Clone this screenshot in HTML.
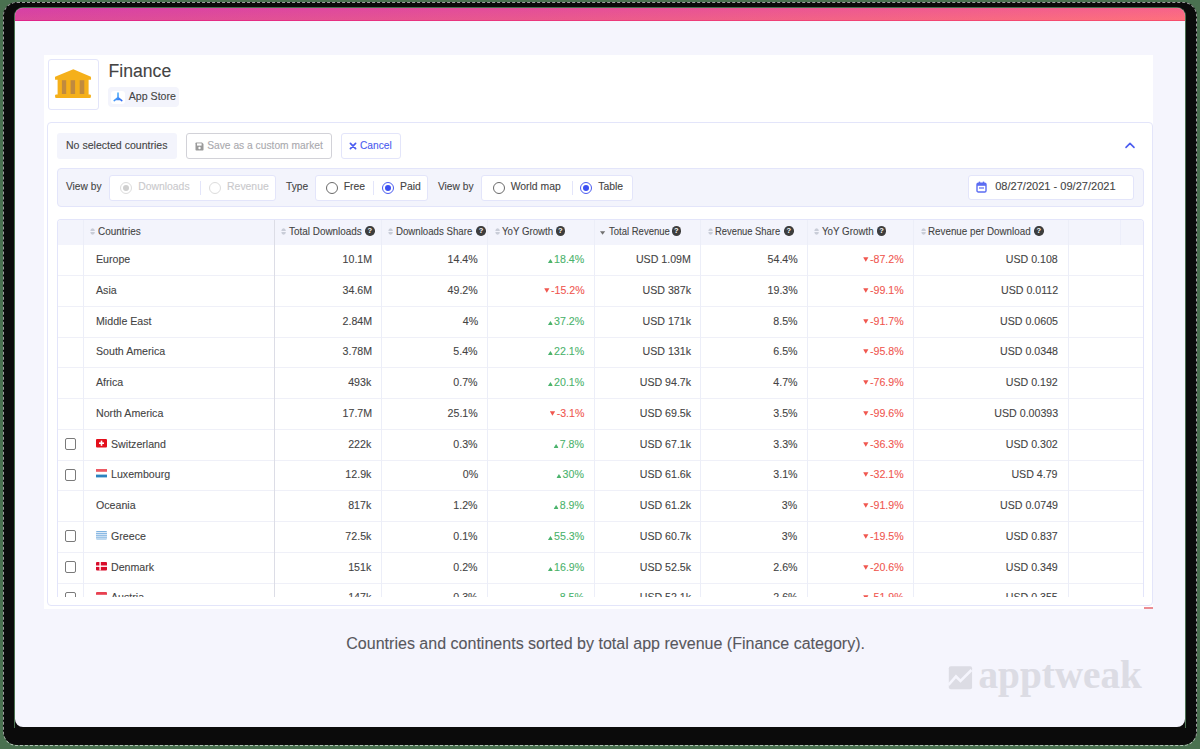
<!DOCTYPE html>
<html><head><meta charset="utf-8">
<style>
*{box-sizing:border-box;margin:0;padding:0}
html,body{width:1200px;height:749px;overflow:hidden;background:#4a7150;font-family:"Liberation Sans",sans-serif;position:relative}
.a{position:absolute}
.t{position:absolute;white-space:nowrap;line-height:1;font-family:"Liberation Sans",sans-serif;-webkit-text-stroke:0.1px currentColor}
#shadow{position:absolute;left:3px;top:2px;width:1194px;height:743px;background:#0b0b0b;border-radius:14px}
#card{position:absolute;left:15px;top:8px;width:1170px;height:719px;background:#f5f5fd;border-radius:8px;overflow:hidden}
#bar{position:absolute;left:0;top:0;width:1170px;height:13px;background:linear-gradient(180deg,rgba(215,50,190,.22),rgba(255,120,110,.12)),linear-gradient(90deg,#d644a0,#e9588e 50%,#ff717c)}
#sp{position:absolute;left:3px;top:2px;width:1194px;height:744px;border:1.5px dashed rgba(255,255,255,.6);border-radius:14px}
#gl{position:absolute;left:14px;top:7px;width:1172px;height:721px;border:1px solid #4a7150;border-bottom:none;border-radius:9px 9px 0 0}
#barline{position:absolute;left:0;top:12px;width:1170px;height:1.3px;background:linear-gradient(90deg,#e0238a,#f74e6c)}
</style></head><body>
<div id="shadow"></div>
<div id="sp"></div>
<div id="gl"></div>
<div id="card"><div id="bar"></div><div id="barline"></div></div>
<div class="a" style="left:44.00px;top:55.00px;width:1109.00px;height:554.00px;background:#fff"></div>
<div class="a" style="left:47.50px;top:58.50px;width:51.50px;height:51.50px;border:1px solid #e3e5fa;border-radius:3px;background:#fff"></div>
<svg class="a" style="left:50px;top:64px" width="46" height="38" viewBox="0 0 46 38">
<path d="M23.3 5.3 L40.9 12.8 Q41.2 15.7 40.9 15.7 L5.1 15.7 Q4.8 13 5.1 12.8 Z" fill="#f5b01a"/>
<rect x="7.6" y="15" width="31" height="16" fill="#f5b01a"/>
<rect x="5.1" y="30.5" width="35.8" height="3.6" rx="1" fill="#f5b01a"/>
<rect x="11.9" y="16.2" width="4.3" height="13.8" fill="#c08a3e"/>
<rect x="20.6" y="16.2" width="4.5" height="13.8" fill="#c08a3e"/>
<rect x="29.7" y="16.2" width="4.6" height="13.8" fill="#c08a3e"/>
</svg>
<div class="t" style="left:108.60px;top:63.00px;font-size:17.6px;color:#444;font-weight:normal;">Finance</div>
<div class="a" style="left:108.00px;top:87.30px;width:71.00px;height:19.70px;background:#f3f4fc;border-radius:4px"></div>
<div class="a" style="left:111.30px;top:90.70px;width:13.70px;height:13.30px;background:#fff;border-radius:3px"></div>
<svg class="a" style="left:111px;top:90px" width="14" height="14" viewBox="0 0 14 14">
<defs><linearGradient id="ag" x1="0" y1="0" x2="1" y2="1"><stop offset="0" stop-color="#5bc6fb"/><stop offset="1" stop-color="#2f6af3"/></linearGradient></defs>
<path d="M7 3 L7 7.6 M7 7.6 L3.2 10.6 M7 7.6 L10.8 10.6 M4.6 9.5 L9.4 9.5" stroke="url(#ag)" stroke-width="1.6" stroke-linecap="round" fill="none"/>
</svg>
<div class="t" style="left:128.80px;top:91.00px;font-size:10.6px;color:#444;font-weight:normal;">App Store</div>
<div class="a" style="left:47.00px;top:122.00px;width:1106.00px;height:484.00px;border:1px solid #e3e5fa;border-radius:4px;background:#fff"></div>
<div class="a" style="left:56.70px;top:132.50px;width:120.60px;height:26.50px;background:#f3f4fc;border-radius:3px"></div>
<div class="t" style="left:66.00px;top:140.00px;font-size:10.55px;color:#444;font-weight:normal;">No selected countries</div>
<div class="a" style="left:186.30px;top:132.80px;width:145.40px;height:25.90px;border:1px solid #d2d2d8;border-radius:3px;background:#fff"></div>
<svg class="a" style="left:195px;top:141.5px" width="9" height="9" viewBox="0 0 9 9">
<path d="M0.5 1.2 Q0.5 0.5 1.2 0.5 L7 0.5 L8.5 2 L8.5 7.8 Q8.5 8.5 7.8 8.5 L1.2 8.5 Q0.5 8.5 0.5 7.8 Z" fill="#9a9a9a"/>
<rect x="2" y="1.4" width="4.6" height="2.2" fill="#fff"/>
<circle cx="4.5" cy="6" r="1.2" fill="#fff"/>
</svg>
<div class="t" style="left:207.20px;top:141.00px;font-size:10.25px;color:#a9a9ae;font-weight:normal;">Save as a custom market</div>
<div class="a" style="left:340.50px;top:132.80px;width:60.20px;height:25.90px;border:1px solid #e3e5fa;border-radius:3px;background:#fff"></div>
<svg class="a" style="left:349px;top:141.5px" width="8" height="8" viewBox="0 0 8 8">
<path d="M1.4 1.4 L6.6 6.6 M6.6 1.4 L1.4 6.6" stroke="#4b5cf0" stroke-width="1.7" stroke-linecap="round"/>
</svg>
<div class="t" style="left:360.00px;top:141.00px;font-size:10.2px;color:#4b5cf0;font-weight:normal;">Cancel</div>
<svg class="a" style="left:1124px;top:141px" width="12" height="8" viewBox="0 0 12 8">
<path d="M2 6.4 L6 2.4 L10 6.4" stroke="#4b5cf0" stroke-width="1.6" fill="none" stroke-linecap="round" stroke-linejoin="round"/>
</svg>
<div class="a" style="left:56.70px;top:168.00px;width:1087.60px;height:38.70px;background:#f3f4fc;border:1px solid #e3e5fa;border-radius:4px"></div>
<div class="t" style="left:66.00px;top:182.00px;font-size:10.2px;color:#444;font-weight:normal;">View by</div>
<div class="a" style="left:109.00px;top:174.50px;width:167.20px;height:26.20px;background:#fff;border:1px solid #e3e5fa;border-radius:3px"></div>
<div class="a" style="left:120.20px;top:181.70px;width:12px;height:12px;border:1px solid #dcdcdc;border-radius:50%;background:#fff"></div>
<div class="a" style="left:123.20px;top:184.70px;width:6px;height:6px;border-radius:50%;background:#cfcfcf"></div>
<div class="t" style="left:138.20px;top:182.00px;font-size:10.4px;color:#c9c9cc;font-weight:normal;">Downloads</div>
<div class="a" style="left:200.20px;top:180.50px;width:1.00px;height:14.00px;background:#e3e5fa"></div>
<div class="a" style="left:208.90px;top:181.70px;width:12px;height:12px;border:1px solid #dcdcdc;border-radius:50%;background:#fff"></div>
<div class="t" style="left:227.10px;top:182.00px;font-size:10.4px;color:#c9c9cc;font-weight:normal;">Revenue</div>
<div class="t" style="left:286.00px;top:182.00px;font-size:10.2px;color:#444;font-weight:normal;">Type</div>
<div class="a" style="left:314.80px;top:174.50px;width:113.30px;height:26.20px;background:#fff;border:1px solid #e3e5fa;border-radius:3px"></div>
<div class="a" style="left:325.70px;top:181.70px;width:12px;height:12px;border:1px solid #6a6a6a;border-radius:50%;background:#fff"></div>
<div class="t" style="left:343.70px;top:182.00px;font-size:10.4px;color:#444;font-weight:normal;">Free</div>
<div class="a" style="left:373.20px;top:180.50px;width:1.00px;height:14.00px;background:#e3e5fa"></div>
<div class="a" style="left:381.80px;top:181.70px;width:12px;height:12px;border:1px solid #4b5cf0;border-radius:50%;background:#fff"></div>
<div class="a" style="left:384.80px;top:184.70px;width:6px;height:6px;border-radius:50%;background:#3b4ff2"></div>
<div class="t" style="left:400.00px;top:182.00px;font-size:10.4px;color:#444;font-weight:normal;">Paid</div>
<div class="t" style="left:438.00px;top:182.00px;font-size:10.2px;color:#444;font-weight:normal;">View by</div>
<div class="a" style="left:481.00px;top:174.50px;width:151.70px;height:26.20px;background:#fff;border:1px solid #e3e5fa;border-radius:3px"></div>
<div class="a" style="left:493.30px;top:181.70px;width:12px;height:12px;border:1px solid #6a6a6a;border-radius:50%;background:#fff"></div>
<div class="t" style="left:510.70px;top:182.00px;font-size:10.4px;color:#444;font-weight:normal;">World map</div>
<div class="a" style="left:571.80px;top:180.50px;width:1.00px;height:14.00px;background:#e3e5fa"></div>
<div class="a" style="left:580.00px;top:181.70px;width:12px;height:12px;border:1px solid #4b5cf0;border-radius:50%;background:#fff"></div>
<div class="a" style="left:583.00px;top:184.70px;width:6px;height:6px;border-radius:50%;background:#3b4ff2"></div>
<div class="t" style="left:598.30px;top:182.00px;font-size:10.4px;color:#444;font-weight:normal;">Table</div>
<div class="a" style="left:967.80px;top:175.30px;width:166.40px;height:24.90px;background:#fff;border:1px solid #e3e5fa;border-radius:3px"></div>
<svg class="a" style="left:976px;top:180.5px" width="11" height="12" viewBox="0 0 11 12">
<rect x="1" y="2.2" width="9" height="8.8" rx="1.3" fill="none" stroke="#5b6cf2" stroke-width="1.4"/>
<rect x="1" y="2.2" width="9" height="2.6" fill="#5b6cf2"/>
<rect x="2.8" y="0.6" width="1.4" height="2.4" fill="#5b6cf2"/>
<rect x="6.8" y="0.6" width="1.4" height="2.4" fill="#5b6cf2"/>
<rect x="3" y="6.4" width="5" height="1.2" fill="#5b6cf2"/>
</svg>
<div class="t" style="left:995.20px;top:181.00px;font-size:11.05px;color:#444;font-weight:normal;">08/27/2021 - 09/27/2021</div>
<div class="a" style="left:57.3px;top:219.3px;width:1086.90px;height:377.50px;overflow:hidden;border:1px solid #e3e5fa;border-bottom:none;border-radius:4px 4px 0 0;background:#fff">
</div>
<div class="a" style="left:58.30px;top:220.30px;width:1084.90px;height:24.55px;background:#f3f4fc;border-radius:3px 3px 0 0"></div>
<div class="a" style="left:58.30px;top:275.11px;width:1084.90px;height:1.00px;background:#eff0f8"></div>
<div class="a" style="left:58.30px;top:305.87px;width:1084.90px;height:1.00px;background:#eff0f8"></div>
<div class="a" style="left:58.30px;top:336.63px;width:1084.90px;height:1.00px;background:#eff0f8"></div>
<div class="a" style="left:58.30px;top:367.39px;width:1084.90px;height:1.00px;background:#eff0f8"></div>
<div class="a" style="left:58.30px;top:398.15px;width:1084.90px;height:1.00px;background:#eff0f8"></div>
<div class="a" style="left:58.30px;top:428.91px;width:1084.90px;height:1.00px;background:#eff0f8"></div>
<div class="a" style="left:58.30px;top:459.67px;width:1084.90px;height:1.00px;background:#eff0f8"></div>
<div class="a" style="left:58.30px;top:490.43px;width:1084.90px;height:1.00px;background:#eff0f8"></div>
<div class="a" style="left:58.30px;top:521.19px;width:1084.90px;height:1.00px;background:#eff0f8"></div>
<div class="a" style="left:58.30px;top:551.95px;width:1084.90px;height:1.00px;background:#eff0f8"></div>
<div class="a" style="left:58.30px;top:582.71px;width:1084.90px;height:1.00px;background:#eff0f8"></div>
<div class="a" style="left:82.90px;top:220.30px;width:1.00px;height:376.50px;background:#eceef8"></div>
<div class="a" style="left:274.00px;top:220.30px;width:1.00px;height:376.50px;background:#dcdde6"></div>
<div class="a" style="left:380.50px;top:220.30px;width:1.00px;height:376.50px;background:#eceef8"></div>
<div class="a" style="left:487.00px;top:220.30px;width:1.00px;height:376.50px;background:#eceef8"></div>
<div class="a" style="left:593.50px;top:220.30px;width:1.00px;height:376.50px;background:#eceef8"></div>
<div class="a" style="left:699.80px;top:220.30px;width:1.00px;height:376.50px;background:#eceef8"></div>
<div class="a" style="left:806.50px;top:220.30px;width:1.00px;height:376.50px;background:#eceef8"></div>
<div class="a" style="left:913.00px;top:220.30px;width:1.00px;height:376.50px;background:#eceef8"></div>
<div class="a" style="left:1067.50px;top:220.30px;width:1.00px;height:376.50px;background:#eceef8"></div>
<div class="a" style="left:1119.90px;top:220.30px;width:1.00px;height:24.55px;background:#eceefa"></div>
<svg class="a" style="left:90.00px;top:227.6px" width="6" height="7" viewBox="0 0 6 7"><path d="M0.3 3 Q0.6 0.4 2.6 0.2 Q4.6 0.4 4.9 3 Z M0.3 3.9 L4.9 3.9 Q4.6 6.6 2.6 6.8 Q0.6 6.6 0.3 3.9 Z" fill="#c9cdd8"/></svg>
<div class="t" style="left:98.00px;top:226.00px;font-size:11.2px;color:#444;font-weight:normal;transform:scaleX(0.8908);transform-origin:0 0;">Countries</div>
<svg class="a" style="left:280.50px;top:227.6px" width="6" height="7" viewBox="0 0 6 7"><path d="M0.3 3 Q0.6 0.4 2.6 0.2 Q4.6 0.4 4.9 3 Z M0.3 3.9 L4.9 3.9 Q4.6 6.6 2.6 6.8 Q0.6 6.6 0.3 3.9 Z" fill="#c9cdd8"/></svg>
<div class="t" style="left:289.20px;top:226.00px;font-size:11.2px;color:#444;font-weight:normal;transform:scaleX(0.8871);transform-origin:0 0;">Total Downloads</div>
<div class="a" style="left:365.00px;top:226px;width:9.5px;height:9.5px;border-radius:50%;background:#3d3d3d;color:#fff;font-size:7.5px;line-height:9.5px;text-align:center;font-weight:bold;font-family:"Liberation Sans",sans-serif">?</div>
<svg class="a" style="left:388.20px;top:227.6px" width="6" height="7" viewBox="0 0 6 7"><path d="M0.3 3 Q0.6 0.4 2.6 0.2 Q4.6 0.4 4.9 3 Z M0.3 3.9 L4.9 3.9 Q4.6 6.6 2.6 6.8 Q0.6 6.6 0.3 3.9 Z" fill="#c9cdd8"/></svg>
<div class="t" style="left:395.70px;top:226.00px;font-size:11.2px;color:#444;font-weight:normal;transform:scaleX(0.8642);transform-origin:0 0;">Downloads Share</div>
<div class="a" style="left:476.40px;top:226px;width:9.5px;height:9.5px;border-radius:50%;background:#3d3d3d;color:#fff;font-size:7.5px;line-height:9.5px;text-align:center;font-weight:bold;font-family:"Liberation Sans",sans-serif">?</div>
<svg class="a" style="left:494.60px;top:227.6px" width="6" height="7" viewBox="0 0 6 7"><path d="M0.3 3 Q0.6 0.4 2.6 0.2 Q4.6 0.4 4.9 3 Z M0.3 3.9 L4.9 3.9 Q4.6 6.6 2.6 6.8 Q0.6 6.6 0.3 3.9 Z" fill="#c9cdd8"/></svg>
<div class="t" style="left:502.00px;top:226.00px;font-size:11.2px;color:#444;font-weight:normal;transform:scaleX(0.8639);transform-origin:0 0;">YoY Growth</div>
<div class="a" style="left:555.50px;top:226px;width:9.5px;height:9.5px;border-radius:50%;background:#3d3d3d;color:#fff;font-size:7.5px;line-height:9.5px;text-align:center;font-weight:bold;font-family:"Liberation Sans",sans-serif">?</div>
<svg class="a" style="left:600.30px;top:230.5px" width="6" height="4" viewBox="0 0 6 4"><path d="M0 0.2 L5.2 0.2 L2.6 3.8 Z" fill="#707070"/></svg>
<div class="t" style="left:608.50px;top:226.00px;font-size:11.2px;color:#444;font-weight:normal;transform:scaleX(0.8505);transform-origin:0 0;">Total Revenue</div>
<div class="a" style="left:671.50px;top:226px;width:9.5px;height:9.5px;border-radius:50%;background:#3d3d3d;color:#fff;font-size:7.5px;line-height:9.5px;text-align:center;font-weight:bold;font-family:"Liberation Sans",sans-serif">?</div>
<svg class="a" style="left:707.60px;top:227.6px" width="6" height="7" viewBox="0 0 6 7"><path d="M0.3 3 Q0.6 0.4 2.6 0.2 Q4.6 0.4 4.9 3 Z M0.3 3.9 L4.9 3.9 Q4.6 6.6 2.6 6.8 Q0.6 6.6 0.3 3.9 Z" fill="#c9cdd8"/></svg>
<div class="t" style="left:714.90px;top:226.00px;font-size:11.2px;color:#444;font-weight:normal;transform:scaleX(0.8377);transform-origin:0 0;">Revenue Share</div>
<div class="a" style="left:784.00px;top:226px;width:9.5px;height:9.5px;border-radius:50%;background:#3d3d3d;color:#fff;font-size:7.5px;line-height:9.5px;text-align:center;font-weight:bold;font-family:"Liberation Sans",sans-serif">?</div>
<svg class="a" style="left:813.80px;top:227.6px" width="6" height="7" viewBox="0 0 6 7"><path d="M0.3 3 Q0.6 0.4 2.6 0.2 Q4.6 0.4 4.9 3 Z M0.3 3.9 L4.9 3.9 Q4.6 6.6 2.6 6.8 Q0.6 6.6 0.3 3.9 Z" fill="#c9cdd8"/></svg>
<div class="t" style="left:821.50px;top:226.00px;font-size:11.2px;color:#444;font-weight:normal;transform:scaleX(0.8740);transform-origin:0 0;">YoY Growth</div>
<div class="a" style="left:876.80px;top:226px;width:9.5px;height:9.5px;border-radius:50%;background:#3d3d3d;color:#fff;font-size:7.5px;line-height:9.5px;text-align:center;font-weight:bold;font-family:"Liberation Sans",sans-serif">?</div>
<svg class="a" style="left:921.10px;top:227.6px" width="6" height="7" viewBox="0 0 6 7"><path d="M0.3 3 Q0.6 0.4 2.6 0.2 Q4.6 0.4 4.9 3 Z M0.3 3.9 L4.9 3.9 Q4.6 6.6 2.6 6.8 Q0.6 6.6 0.3 3.9 Z" fill="#c9cdd8"/></svg>
<div class="t" style="left:928.00px;top:226.00px;font-size:11.2px;color:#444;font-weight:normal;transform:scaleX(0.8774);transform-origin:0 0;">Revenue per Download</div>
<div class="a" style="left:1034.00px;top:226px;width:9.5px;height:9.5px;border-radius:50%;background:#3d3d3d;color:#fff;font-size:7.5px;line-height:9.5px;text-align:center;font-weight:bold;font-family:"Liberation Sans",sans-serif">?</div>
<div class="t" style="left:96.20px;top:254.00px;font-size:11.2px;color:#444;font-weight:normal;transform:scaleX(0.9500);transform-origin:0 0;">Europe</div>
<div class="t" style="right:828.40px;top:254.00px;font-size:11.2px;color:#444;font-weight:normal;transform:scaleX(0.9500);transform-origin:100% 0;">10.1M</div>
<div class="t" style="right:722.10px;top:254.00px;font-size:11.2px;color:#444;font-weight:normal;transform:scaleX(0.9500);transform-origin:100% 0;">14.4%</div>
<div class="t" style="right:615.70px;top:254.00px;font-size:11.2px;color:#4bb36c;font-weight:normal;transform:scaleX(0.9500);transform-origin:100% 0;"><svg width="5.3" height="4" viewBox="0 0 5.3 4" style="vertical-align:0;margin-right:1.2px"><path d="M0 4 L2.65 0 L5.3 4 Z" fill="#4bb36c"/></svg>18.4%</div>
<div class="t" style="right:509.30px;top:254.00px;font-size:11.2px;color:#444;font-weight:normal;transform:scaleX(0.9500);transform-origin:100% 0;">USD 1.09M</div>
<div class="t" style="right:402.70px;top:254.00px;font-size:11.2px;color:#444;font-weight:normal;transform:scaleX(0.9500);transform-origin:100% 0;">54.4%</div>
<div class="t" style="right:296.60px;top:254.00px;font-size:11.2px;color:#f0574f;font-weight:normal;transform:scaleX(0.9500);transform-origin:100% 0;"><svg width="5.6" height="5" viewBox="0 0 5.6 5" style="vertical-align:0.6px;margin-right:1.6px"><path d="M0 0.3 L5.6 0.3 L2.8 4.8 Z" fill="#f0574f"/></svg>-87.2%</div>
<div class="t" style="right:142.30px;top:254.00px;font-size:11.2px;color:#444;font-weight:normal;transform:scaleX(0.9500);transform-origin:100% 0;">USD 0.108</div>
<div class="t" style="left:96.20px;top:285.00px;font-size:11.2px;color:#444;font-weight:normal;transform:scaleX(0.9500);transform-origin:0 0;">Asia</div>
<div class="t" style="right:828.40px;top:285.00px;font-size:11.2px;color:#444;font-weight:normal;transform:scaleX(0.9500);transform-origin:100% 0;">34.6M</div>
<div class="t" style="right:722.10px;top:285.00px;font-size:11.2px;color:#444;font-weight:normal;transform:scaleX(0.9500);transform-origin:100% 0;">49.2%</div>
<div class="t" style="right:615.70px;top:285.00px;font-size:11.2px;color:#f0574f;font-weight:normal;transform:scaleX(0.9500);transform-origin:100% 0;"><svg width="5.6" height="5" viewBox="0 0 5.6 5" style="vertical-align:0.6px;margin-right:1.6px"><path d="M0 0.3 L5.6 0.3 L2.8 4.8 Z" fill="#f0574f"/></svg>-15.2%</div>
<div class="t" style="right:509.30px;top:285.00px;font-size:11.2px;color:#444;font-weight:normal;transform:scaleX(0.9500);transform-origin:100% 0;">USD 387k</div>
<div class="t" style="right:402.70px;top:285.00px;font-size:11.2px;color:#444;font-weight:normal;transform:scaleX(0.9500);transform-origin:100% 0;">19.3%</div>
<div class="t" style="right:296.60px;top:285.00px;font-size:11.2px;color:#f0574f;font-weight:normal;transform:scaleX(0.9500);transform-origin:100% 0;"><svg width="5.6" height="5" viewBox="0 0 5.6 5" style="vertical-align:0.6px;margin-right:1.6px"><path d="M0 0.3 L5.6 0.3 L2.8 4.8 Z" fill="#f0574f"/></svg>-99.1%</div>
<div class="t" style="right:142.30px;top:285.00px;font-size:11.2px;color:#444;font-weight:normal;transform:scaleX(0.9500);transform-origin:100% 0;">USD 0.0112</div>
<div class="t" style="left:96.20px;top:316.00px;font-size:11.2px;color:#444;font-weight:normal;transform:scaleX(0.9500);transform-origin:0 0;">Middle East</div>
<div class="t" style="right:828.40px;top:316.00px;font-size:11.2px;color:#444;font-weight:normal;transform:scaleX(0.9500);transform-origin:100% 0;">2.84M</div>
<div class="t" style="right:722.10px;top:316.00px;font-size:11.2px;color:#444;font-weight:normal;transform:scaleX(0.9500);transform-origin:100% 0;">4%</div>
<div class="t" style="right:615.70px;top:316.00px;font-size:11.2px;color:#4bb36c;font-weight:normal;transform:scaleX(0.9500);transform-origin:100% 0;"><svg width="5.3" height="4" viewBox="0 0 5.3 4" style="vertical-align:0;margin-right:1.2px"><path d="M0 4 L2.65 0 L5.3 4 Z" fill="#4bb36c"/></svg>37.2%</div>
<div class="t" style="right:509.30px;top:316.00px;font-size:11.2px;color:#444;font-weight:normal;transform:scaleX(0.9500);transform-origin:100% 0;">USD 171k</div>
<div class="t" style="right:402.70px;top:316.00px;font-size:11.2px;color:#444;font-weight:normal;transform:scaleX(0.9500);transform-origin:100% 0;">8.5%</div>
<div class="t" style="right:296.60px;top:316.00px;font-size:11.2px;color:#f0574f;font-weight:normal;transform:scaleX(0.9500);transform-origin:100% 0;"><svg width="5.6" height="5" viewBox="0 0 5.6 5" style="vertical-align:0.6px;margin-right:1.6px"><path d="M0 0.3 L5.6 0.3 L2.8 4.8 Z" fill="#f0574f"/></svg>-91.7%</div>
<div class="t" style="right:142.30px;top:316.00px;font-size:11.2px;color:#444;font-weight:normal;transform:scaleX(0.9500);transform-origin:100% 0;">USD 0.0605</div>
<div class="t" style="left:96.20px;top:346.00px;font-size:11.2px;color:#444;font-weight:normal;transform:scaleX(0.9500);transform-origin:0 0;">South America</div>
<div class="t" style="right:828.40px;top:346.00px;font-size:11.2px;color:#444;font-weight:normal;transform:scaleX(0.9500);transform-origin:100% 0;">3.78M</div>
<div class="t" style="right:722.10px;top:346.00px;font-size:11.2px;color:#444;font-weight:normal;transform:scaleX(0.9500);transform-origin:100% 0;">5.4%</div>
<div class="t" style="right:615.70px;top:346.00px;font-size:11.2px;color:#4bb36c;font-weight:normal;transform:scaleX(0.9500);transform-origin:100% 0;"><svg width="5.3" height="4" viewBox="0 0 5.3 4" style="vertical-align:0;margin-right:1.2px"><path d="M0 4 L2.65 0 L5.3 4 Z" fill="#4bb36c"/></svg>22.1%</div>
<div class="t" style="right:509.30px;top:346.00px;font-size:11.2px;color:#444;font-weight:normal;transform:scaleX(0.9500);transform-origin:100% 0;">USD 131k</div>
<div class="t" style="right:402.70px;top:346.00px;font-size:11.2px;color:#444;font-weight:normal;transform:scaleX(0.9500);transform-origin:100% 0;">6.5%</div>
<div class="t" style="right:296.60px;top:346.00px;font-size:11.2px;color:#f0574f;font-weight:normal;transform:scaleX(0.9500);transform-origin:100% 0;"><svg width="5.6" height="5" viewBox="0 0 5.6 5" style="vertical-align:0.6px;margin-right:1.6px"><path d="M0 0.3 L5.6 0.3 L2.8 4.8 Z" fill="#f0574f"/></svg>-95.8%</div>
<div class="t" style="right:142.30px;top:346.00px;font-size:11.2px;color:#444;font-weight:normal;transform:scaleX(0.9500);transform-origin:100% 0;">USD 0.0348</div>
<div class="t" style="left:96.20px;top:377.00px;font-size:11.2px;color:#444;font-weight:normal;transform:scaleX(0.9500);transform-origin:0 0;">Africa</div>
<div class="t" style="right:828.40px;top:377.00px;font-size:11.2px;color:#444;font-weight:normal;transform:scaleX(0.9500);transform-origin:100% 0;">493k</div>
<div class="t" style="right:722.10px;top:377.00px;font-size:11.2px;color:#444;font-weight:normal;transform:scaleX(0.9500);transform-origin:100% 0;">0.7%</div>
<div class="t" style="right:615.70px;top:377.00px;font-size:11.2px;color:#4bb36c;font-weight:normal;transform:scaleX(0.9500);transform-origin:100% 0;"><svg width="5.3" height="4" viewBox="0 0 5.3 4" style="vertical-align:0;margin-right:1.2px"><path d="M0 4 L2.65 0 L5.3 4 Z" fill="#4bb36c"/></svg>20.1%</div>
<div class="t" style="right:509.30px;top:377.00px;font-size:11.2px;color:#444;font-weight:normal;transform:scaleX(0.9500);transform-origin:100% 0;">USD 94.7k</div>
<div class="t" style="right:402.70px;top:377.00px;font-size:11.2px;color:#444;font-weight:normal;transform:scaleX(0.9500);transform-origin:100% 0;">4.7%</div>
<div class="t" style="right:296.60px;top:377.00px;font-size:11.2px;color:#f0574f;font-weight:normal;transform:scaleX(0.9500);transform-origin:100% 0;"><svg width="5.6" height="5" viewBox="0 0 5.6 5" style="vertical-align:0.6px;margin-right:1.6px"><path d="M0 0.3 L5.6 0.3 L2.8 4.8 Z" fill="#f0574f"/></svg>-76.9%</div>
<div class="t" style="right:142.30px;top:377.00px;font-size:11.2px;color:#444;font-weight:normal;transform:scaleX(0.9500);transform-origin:100% 0;">USD 0.192</div>
<div class="t" style="left:96.20px;top:408.00px;font-size:11.2px;color:#444;font-weight:normal;transform:scaleX(0.9500);transform-origin:0 0;">North America</div>
<div class="t" style="right:828.40px;top:408.00px;font-size:11.2px;color:#444;font-weight:normal;transform:scaleX(0.9500);transform-origin:100% 0;">17.7M</div>
<div class="t" style="right:722.10px;top:408.00px;font-size:11.2px;color:#444;font-weight:normal;transform:scaleX(0.9500);transform-origin:100% 0;">25.1%</div>
<div class="t" style="right:615.70px;top:408.00px;font-size:11.2px;color:#f0574f;font-weight:normal;transform:scaleX(0.9500);transform-origin:100% 0;"><svg width="5.6" height="5" viewBox="0 0 5.6 5" style="vertical-align:0.6px;margin-right:1.6px"><path d="M0 0.3 L5.6 0.3 L2.8 4.8 Z" fill="#f0574f"/></svg>-3.1%</div>
<div class="t" style="right:509.30px;top:408.00px;font-size:11.2px;color:#444;font-weight:normal;transform:scaleX(0.9500);transform-origin:100% 0;">USD 69.5k</div>
<div class="t" style="right:402.70px;top:408.00px;font-size:11.2px;color:#444;font-weight:normal;transform:scaleX(0.9500);transform-origin:100% 0;">3.5%</div>
<div class="t" style="right:296.60px;top:408.00px;font-size:11.2px;color:#f0574f;font-weight:normal;transform:scaleX(0.9500);transform-origin:100% 0;"><svg width="5.6" height="5" viewBox="0 0 5.6 5" style="vertical-align:0.6px;margin-right:1.6px"><path d="M0 0.3 L5.6 0.3 L2.8 4.8 Z" fill="#f0574f"/></svg>-99.6%</div>
<div class="t" style="right:142.30px;top:408.00px;font-size:11.2px;color:#444;font-weight:normal;transform:scaleX(0.9500);transform-origin:100% 0;">USD 0.00393</div>
<div class="a" style="left:64.6px;top:438.11px;width:11.8px;height:11.8px;border:1.2px solid #7a7a7a;border-radius:2px;background:#fff"></div>
<svg class="a" style="left:96.30px;top:438.51px" width="11" height="9" viewBox="0 0 11 9"><rect width="11" height="8.4" rx="1" fill="#e30f1b"/><rect x="4.7" y="1.6" width="1.6" height="5.2" fill="#fff"/><rect x="3" y="3.4" width="5" height="1.6" fill="#fff"/></svg>
<div class="t" style="left:111.40px;top:439.00px;font-size:11.2px;color:#444;font-weight:normal;transform:scaleX(0.9500);transform-origin:0 0;">Switzerland</div>
<div class="t" style="right:828.40px;top:439.00px;font-size:11.2px;color:#444;font-weight:normal;transform:scaleX(0.9500);transform-origin:100% 0;">222k</div>
<div class="t" style="right:722.10px;top:439.00px;font-size:11.2px;color:#444;font-weight:normal;transform:scaleX(0.9500);transform-origin:100% 0;">0.3%</div>
<div class="t" style="right:615.70px;top:439.00px;font-size:11.2px;color:#4bb36c;font-weight:normal;transform:scaleX(0.9500);transform-origin:100% 0;"><svg width="5.3" height="4" viewBox="0 0 5.3 4" style="vertical-align:0;margin-right:1.2px"><path d="M0 4 L2.65 0 L5.3 4 Z" fill="#4bb36c"/></svg>7.8%</div>
<div class="t" style="right:509.30px;top:439.00px;font-size:11.2px;color:#444;font-weight:normal;transform:scaleX(0.9500);transform-origin:100% 0;">USD 67.1k</div>
<div class="t" style="right:402.70px;top:439.00px;font-size:11.2px;color:#444;font-weight:normal;transform:scaleX(0.9500);transform-origin:100% 0;">3.3%</div>
<div class="t" style="right:296.60px;top:439.00px;font-size:11.2px;color:#f0574f;font-weight:normal;transform:scaleX(0.9500);transform-origin:100% 0;"><svg width="5.6" height="5" viewBox="0 0 5.6 5" style="vertical-align:0.6px;margin-right:1.6px"><path d="M0 0.3 L5.6 0.3 L2.8 4.8 Z" fill="#f0574f"/></svg>-36.3%</div>
<div class="t" style="right:142.30px;top:439.00px;font-size:11.2px;color:#444;font-weight:normal;transform:scaleX(0.9500);transform-origin:100% 0;">USD 0.302</div>
<div class="a" style="left:64.6px;top:468.87px;width:11.8px;height:11.8px;border:1.2px solid #7a7a7a;border-radius:2px;background:#fff"></div>
<svg class="a" style="left:96.30px;top:469.27px" width="11" height="9" viewBox="0 0 11 9"><rect width="11" height="8.4" rx="1" fill="#fff"/><rect width="11" height="2.8" fill="#ec5a64"/><rect y="5.6" width="11" height="2.8" fill="#2a82bf"/></svg>
<div class="t" style="left:111.40px;top:469.00px;font-size:11.2px;color:#444;font-weight:normal;transform:scaleX(0.9500);transform-origin:0 0;">Luxembourg</div>
<div class="t" style="right:828.40px;top:469.00px;font-size:11.2px;color:#444;font-weight:normal;transform:scaleX(0.9500);transform-origin:100% 0;">12.9k</div>
<div class="t" style="right:722.10px;top:469.00px;font-size:11.2px;color:#444;font-weight:normal;transform:scaleX(0.9500);transform-origin:100% 0;">0%</div>
<div class="t" style="right:615.70px;top:469.00px;font-size:11.2px;color:#4bb36c;font-weight:normal;transform:scaleX(0.9500);transform-origin:100% 0;"><svg width="5.3" height="4" viewBox="0 0 5.3 4" style="vertical-align:0;margin-right:1.2px"><path d="M0 4 L2.65 0 L5.3 4 Z" fill="#4bb36c"/></svg>30%</div>
<div class="t" style="right:509.30px;top:469.00px;font-size:11.2px;color:#444;font-weight:normal;transform:scaleX(0.9500);transform-origin:100% 0;">USD 61.6k</div>
<div class="t" style="right:402.70px;top:469.00px;font-size:11.2px;color:#444;font-weight:normal;transform:scaleX(0.9500);transform-origin:100% 0;">3.1%</div>
<div class="t" style="right:296.60px;top:469.00px;font-size:11.2px;color:#f0574f;font-weight:normal;transform:scaleX(0.9500);transform-origin:100% 0;"><svg width="5.6" height="5" viewBox="0 0 5.6 5" style="vertical-align:0.6px;margin-right:1.6px"><path d="M0 0.3 L5.6 0.3 L2.8 4.8 Z" fill="#f0574f"/></svg>-32.1%</div>
<div class="t" style="right:142.30px;top:469.00px;font-size:11.2px;color:#444;font-weight:normal;transform:scaleX(0.9500);transform-origin:100% 0;">USD 4.79</div>
<div class="t" style="left:96.20px;top:500.00px;font-size:11.2px;color:#444;font-weight:normal;transform:scaleX(0.9500);transform-origin:0 0;">Oceania</div>
<div class="t" style="right:828.40px;top:500.00px;font-size:11.2px;color:#444;font-weight:normal;transform:scaleX(0.9500);transform-origin:100% 0;">817k</div>
<div class="t" style="right:722.10px;top:500.00px;font-size:11.2px;color:#444;font-weight:normal;transform:scaleX(0.9500);transform-origin:100% 0;">1.2%</div>
<div class="t" style="right:615.70px;top:500.00px;font-size:11.2px;color:#4bb36c;font-weight:normal;transform:scaleX(0.9500);transform-origin:100% 0;"><svg width="5.3" height="4" viewBox="0 0 5.3 4" style="vertical-align:0;margin-right:1.2px"><path d="M0 4 L2.65 0 L5.3 4 Z" fill="#4bb36c"/></svg>8.9%</div>
<div class="t" style="right:509.30px;top:500.00px;font-size:11.2px;color:#444;font-weight:normal;transform:scaleX(0.9500);transform-origin:100% 0;">USD 61.2k</div>
<div class="t" style="right:402.70px;top:500.00px;font-size:11.2px;color:#444;font-weight:normal;transform:scaleX(0.9500);transform-origin:100% 0;">3%</div>
<div class="t" style="right:296.60px;top:500.00px;font-size:11.2px;color:#f0574f;font-weight:normal;transform:scaleX(0.9500);transform-origin:100% 0;"><svg width="5.6" height="5" viewBox="0 0 5.6 5" style="vertical-align:0.6px;margin-right:1.6px"><path d="M0 0.3 L5.6 0.3 L2.8 4.8 Z" fill="#f0574f"/></svg>-91.9%</div>
<div class="t" style="right:142.30px;top:500.00px;font-size:11.2px;color:#444;font-weight:normal;transform:scaleX(0.9500);transform-origin:100% 0;">USD 0.0749</div>
<div class="a" style="left:64.6px;top:530.39px;width:11.8px;height:11.8px;border:1.2px solid #7a7a7a;border-radius:2px;background:#fff"></div>
<svg class="a" style="left:96.30px;top:530.79px" width="11" height="9" viewBox="0 0 11 9"><rect width="11" height="8.4" rx="1" fill="#7fb3e0"/><rect y="1.0" width="11" height="0.9" fill="#e8f1fa"/><rect y="2.9" width="11" height="0.9" fill="#e8f1fa"/><rect y="4.8" width="11" height="0.9" fill="#e8f1fa"/><rect y="6.7" width="11" height="0.9" fill="#e8f1fa"/></svg>
<div class="t" style="left:111.40px;top:531.00px;font-size:11.2px;color:#444;font-weight:normal;transform:scaleX(0.9500);transform-origin:0 0;">Greece</div>
<div class="t" style="right:828.40px;top:531.00px;font-size:11.2px;color:#444;font-weight:normal;transform:scaleX(0.9500);transform-origin:100% 0;">72.5k</div>
<div class="t" style="right:722.10px;top:531.00px;font-size:11.2px;color:#444;font-weight:normal;transform:scaleX(0.9500);transform-origin:100% 0;">0.1%</div>
<div class="t" style="right:615.70px;top:531.00px;font-size:11.2px;color:#4bb36c;font-weight:normal;transform:scaleX(0.9500);transform-origin:100% 0;"><svg width="5.3" height="4" viewBox="0 0 5.3 4" style="vertical-align:0;margin-right:1.2px"><path d="M0 4 L2.65 0 L5.3 4 Z" fill="#4bb36c"/></svg>55.3%</div>
<div class="t" style="right:509.30px;top:531.00px;font-size:11.2px;color:#444;font-weight:normal;transform:scaleX(0.9500);transform-origin:100% 0;">USD 60.7k</div>
<div class="t" style="right:402.70px;top:531.00px;font-size:11.2px;color:#444;font-weight:normal;transform:scaleX(0.9500);transform-origin:100% 0;">3%</div>
<div class="t" style="right:296.60px;top:531.00px;font-size:11.2px;color:#f0574f;font-weight:normal;transform:scaleX(0.9500);transform-origin:100% 0;"><svg width="5.6" height="5" viewBox="0 0 5.6 5" style="vertical-align:0.6px;margin-right:1.6px"><path d="M0 0.3 L5.6 0.3 L2.8 4.8 Z" fill="#f0574f"/></svg>-19.5%</div>
<div class="t" style="right:142.30px;top:531.00px;font-size:11.2px;color:#444;font-weight:normal;transform:scaleX(0.9500);transform-origin:100% 0;">USD 0.837</div>
<div class="a" style="left:64.6px;top:561.15px;width:11.8px;height:11.8px;border:1.2px solid #7a7a7a;border-radius:2px;background:#fff"></div>
<svg class="a" style="left:96.30px;top:561.55px" width="11" height="9" viewBox="0 0 11 9"><rect width="11" height="8.4" rx="1" fill="#d80c2a"/><rect x="3.4" width="1.4" height="8.4" fill="#fff"/><rect y="3.5" width="11" height="1.4" fill="#fff"/></svg>
<div class="t" style="left:111.40px;top:562.00px;font-size:11.2px;color:#444;font-weight:normal;transform:scaleX(0.9500);transform-origin:0 0;">Denmark</div>
<div class="t" style="right:828.40px;top:562.00px;font-size:11.2px;color:#444;font-weight:normal;transform:scaleX(0.9500);transform-origin:100% 0;">151k</div>
<div class="t" style="right:722.10px;top:562.00px;font-size:11.2px;color:#444;font-weight:normal;transform:scaleX(0.9500);transform-origin:100% 0;">0.2%</div>
<div class="t" style="right:615.70px;top:562.00px;font-size:11.2px;color:#4bb36c;font-weight:normal;transform:scaleX(0.9500);transform-origin:100% 0;"><svg width="5.3" height="4" viewBox="0 0 5.3 4" style="vertical-align:0;margin-right:1.2px"><path d="M0 4 L2.65 0 L5.3 4 Z" fill="#4bb36c"/></svg>16.9%</div>
<div class="t" style="right:509.30px;top:562.00px;font-size:11.2px;color:#444;font-weight:normal;transform:scaleX(0.9500);transform-origin:100% 0;">USD 52.5k</div>
<div class="t" style="right:402.70px;top:562.00px;font-size:11.2px;color:#444;font-weight:normal;transform:scaleX(0.9500);transform-origin:100% 0;">2.6%</div>
<div class="t" style="right:296.60px;top:562.00px;font-size:11.2px;color:#f0574f;font-weight:normal;transform:scaleX(0.9500);transform-origin:100% 0;"><svg width="5.6" height="5" viewBox="0 0 5.6 5" style="vertical-align:0.6px;margin-right:1.6px"><path d="M0 0.3 L5.6 0.3 L2.8 4.8 Z" fill="#f0574f"/></svg>-20.6%</div>
<div class="t" style="right:142.30px;top:562.00px;font-size:11.2px;color:#444;font-weight:normal;transform:scaleX(0.9500);transform-origin:100% 0;">USD 0.349</div>
<div class="a" style="left:64.6px;top:591.91px;width:11.8px;height:11.8px;border:1.2px solid #7a7a7a;border-radius:2px;background:#fff"></div>
<svg class="a" style="left:96.30px;top:592.31px" width="11" height="9" viewBox="0 0 11 9"><rect width="11" height="8.4" rx="1" fill="#e84050"/><rect y="2.8" width="11" height="2.8" fill="#fff"/></svg>
<div class="t" style="left:111.40px;top:592.00px;font-size:11.2px;color:#444;font-weight:normal;transform:scaleX(0.9500);transform-origin:0 0;">Austria</div>
<div class="t" style="right:828.40px;top:592.00px;font-size:11.2px;color:#444;font-weight:normal;transform:scaleX(0.9500);transform-origin:100% 0;">147k</div>
<div class="t" style="right:722.10px;top:592.00px;font-size:11.2px;color:#444;font-weight:normal;transform:scaleX(0.9500);transform-origin:100% 0;">0.3%</div>
<div class="t" style="right:615.70px;top:592.00px;font-size:11.2px;color:#4bb36c;font-weight:normal;transform:scaleX(0.9500);transform-origin:100% 0;"><svg width="5.3" height="4" viewBox="0 0 5.3 4" style="vertical-align:0;margin-right:1.2px"><path d="M0 4 L2.65 0 L5.3 4 Z" fill="#4bb36c"/></svg>8.5%</div>
<div class="t" style="right:509.30px;top:592.00px;font-size:11.2px;color:#444;font-weight:normal;transform:scaleX(0.9500);transform-origin:100% 0;">USD 52.1k</div>
<div class="t" style="right:402.70px;top:592.00px;font-size:11.2px;color:#444;font-weight:normal;transform:scaleX(0.9500);transform-origin:100% 0;">2.6%</div>
<div class="t" style="right:296.60px;top:592.00px;font-size:11.2px;color:#f0574f;font-weight:normal;transform:scaleX(0.9500);transform-origin:100% 0;"><svg width="5.6" height="5" viewBox="0 0 5.6 5" style="vertical-align:0.6px;margin-right:1.6px"><path d="M0 0.3 L5.6 0.3 L2.8 4.8 Z" fill="#f0574f"/></svg>-51.9%</div>
<div class="t" style="right:142.30px;top:592.00px;font-size:11.2px;color:#444;font-weight:normal;transform:scaleX(0.9500);transform-origin:100% 0;">USD 0.355</div>
<div class="a" style="left:57.30px;top:596.80px;width:1087.90px;height:8.20px;background:#fff"></div>
<div class="a" style="left:1144.00px;top:606.50px;width:9.00px;height:2.00px;background:#e0404a;opacity:.6"></div>
<div class="t" style="left:346.30px;top:635.00px;font-size:16.05px;color:#58585e;font-weight:normal;">Countries and continents sorted by total app revenue (Finance category).</div>
<svg class="a" style="left:948px;top:666px" width="25" height="24" viewBox="0 0 25 24">
<rect x="0.8" y="0.3" width="23.3" height="23" rx="2" fill="#dcdce4"/>
<path d="M0.5 19 L8 10.5 L12.5 15 L23.5 4" stroke="#f5f5fd" stroke-width="2.6" fill="none"/>
</svg>
<div class='t' style="left:978.5px;top:654.7px;font-family:'Liberation Serif',serif;font-weight:bold;font-size:39.2px;color:#dcdce4;line-height:1">apptweak</div>
</body></html>
